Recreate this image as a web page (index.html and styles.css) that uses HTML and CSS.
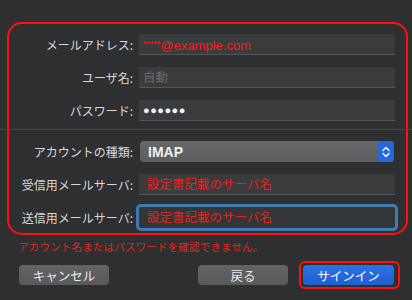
FILE: index.html
```html
<!DOCTYPE html>
<html>
<head>
    <title>アカウントを追加</title>
    <link rel="stylesheet" href="styles.css">
</head>
<body>
    <div class="account-box">
        <div class="row">
            <span class="label">メールアドレス:</span>
            <div class="field email"><span class="stars">*****</span>@example.com</div>
        </div>
        <div class="row">
            <span class="label">ユーザ名:</span>
            <div class="field placeholder">自動</div>
        </div>
        <div class="row">
            <span class="label">パスワード:</span>
            <div class="field dots">●●●●●●</div>
        </div>

        <div class="divider"></div>

        <div class="row">
            <span class="label">アカウントの種類:</span>
            <div class="popup">
                <span>IMAP</span>
                <span class="chevrons">
                    <svg width="10" height="14" viewBox="0 0 10 14">
                        <path d="M2 5.5 L5 2.5 L8 5.5 M2 8.5 L5 11.5 L8 8.5" fill="none" stroke="#fff" stroke-width="1.4" stroke-linecap="round" stroke-linejoin="round"/>
                    </svg>
                </span>
            </div>
        </div>
        <div class="row">
            <span class="label">受信用メールサーバ:</span>
            <div class="field note">設定書記載のサーバ名</div>
        </div>
        <div class="row">
            <span class="label">送信用メールサーバ:</span>
            <div class="field note focused">設定書記載のサーバ名</div>
        </div>
    </div>

    <p class="error">アカウント名またはパスワードを確認できません。</p>

    <div class="actions">
        <button class="btn cancel">キャンセル</button>
        <button class="btn">戻る</button>
        <div class="highlight">
            <button class="btn primary">サインイン</button>
        </div>
    </div>
</body>
</html>
```

FILE: styles.css
```css
body {
    margin: 0;
    width: 412px;
    height: 300px;
    overflow: hidden;
    background: #2e2f30;
    font-family: "Liberation Sans", "Noto Sans CJK JP", sans-serif;
    color: #dcdcdc;
}

.account-box {
    margin: 22px 4px 0 7px;
    padding: 10px 11px 5px 0;
    border: 2px solid #ff1010;
    border-radius: 15px;
    display: flex;
    flex-direction: column;
    gap: 12px;
}

.row {
    display: grid;
    grid-template-columns: 124px 1fr;
    column-gap: 6px;
    align-items: center;
}

.label {
    text-align: right;
    font-size: 12px;
    color: #d9d9d9;
    font-family: "Noto Sans CJK JP", sans-serif;
}

.field {
    height: 20px;
    line-height: 20px;
    background: #3a3b3d;
    border-bottom: 1px solid #56575a;
    padding-left: 4px;
    font-size: 12.5px;
    white-space: nowrap;
    overflow: hidden;
}

.email {
    color: #ff1a1a;
    font-size: 13px;
}
.stars {
    font-size: 9px;
    vertical-align: 3px;
}

.placeholder {
    color: #6c6d6f;
    font-family: "Noto Sans CJK JP", sans-serif;
}

.dots {
    color: #f2f2f2;
    font-size: 11px;
    letter-spacing: 0.5px;
}

.note {
    color: #e8221c;
    padding-left: 8px;
    font-family: "Noto Sans CJK JP", sans-serif;
}

.focused {
    background: #343537;
    border-bottom: none;
    height: 21px;
    box-shadow: 0 0 0 3px #3d7bb3;
    border-radius: 2px;
}

.divider {
    height: 1px;
    background: #47484a;
    margin: -4px -17px -1px -9px;
}

.popup {
    height: 21px;
    margin-left: 1px;
    margin-right: 1px;
    border-radius: 4px;
    background: linear-gradient(#666769, #5c5d5f);
    display: flex;
    align-items: center;
    justify-content: space-between;
    padding-left: 8px;
    font-size: 14px;
    font-weight: bold;
    color: #f0f0f0;
    overflow: hidden;
}

.chevrons {
    width: 16px;
    height: 21px;
    background: #2468e0;
    display: flex;
    align-items: center;
    justify-content: center;
}

.error {
    margin: 5px 0 0 18px;
    font-size: 10.7px;
    line-height: 14px;
    color: #dc2a1f;
    font-family: "Noto Sans CJK JP", sans-serif;
}

.actions {
    display: flex;
    align-items: center;
    gap: 11px;
    padding: 7px 12px 0 19px;
}

.btn {
    width: 90px;
    height: 20px;
    border: none;
    border-radius: 4px;
    background: linear-gradient(#626365, #58595b);
    color: #ececec;
    font-size: 12.5px;
    font-family: "Noto Sans CJK JP", sans-serif;
    padding: 0;
}

.cancel {
    margin-right: auto;
}

.highlight {
    padding: 2px 4px 2px 2px;
    border: 2px solid #ff1010;
    border-radius: 6px;
    display: flex;
}

.primary {
    width: 91px;
    background: linear-gradient(#2c72e6, #1f5fd2);
    color: #fff;
}
```
